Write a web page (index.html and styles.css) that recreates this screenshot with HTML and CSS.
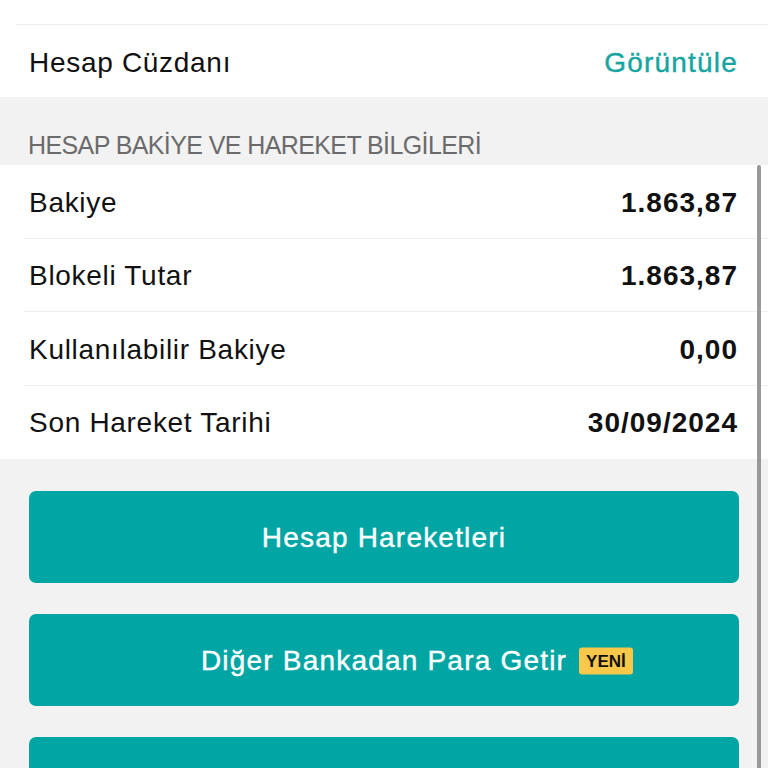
FILE: index.html
```html
<!DOCTYPE html>
<html lang="tr">
<head>
<meta charset="utf-8">
<link rel="stylesheet" href="styles.css">
</head>
<body>
<div class="screen">
  <div class="card top-card">
    <div class="row partial"></div>
    <div class="row wallet">
      <span class="label">Hesap Cüzdanı</span>
      <span class="link">Görüntüle</span>
    </div>
  </div>
  <div class="section-head">HESAP BAKİYE VE HAREKET BİLGİLERİ</div>
  <div class="card">
    <div class="row data"><span class="label">Bakiye</span><span class="value">1.863,87</span></div>
    <div class="row data"><span class="label">Blokeli Tutar</span><span class="value">1.863,87</span></div>
    <div class="row data"><span class="label">Kullanılabilir Bakiye</span><span class="value">0,00</span></div>
    <div class="row data last"><span class="label">Son Hareket Tarihi</span><span class="value">30/09/2024</span></div>
  </div>
  <div class="actions">
    <button class="btn">Hesap Hareketleri</button>
    <button class="btn"><span class="btn-text">Diğer Bankadan Para Getir<span class="badge">YENİ</span></span></button>
    <button class="btn"></button>
  </div>
  <div class="scrollbar"></div>
</div>
</body>
</html>
```

FILE: styles.css
```css
* { box-sizing: border-box; }
html, body {
  margin: 0;
  padding: 0;
  background: #f2f2f2;
}
body {
  font-family: "Liberation Sans", Arial, sans-serif;
  color: #111;
  width: 768px;
  height: 768px;
  overflow: hidden;
}
.screen {
  position: relative;
  width: 768px;
  height: 768px;
  overflow: hidden;
}
.card {
  background: #fff;
}
.row {
  display: flex;
  align-items: center;
  justify-content: space-between;
  padding: 2px 30px 0 29px;
  font-size: 28px;
  letter-spacing: 0.7px;
}
.partial {
  height: 25px;
  border-bottom: 1px solid #efefef;
  margin-left: 16px;
  padding: 0;
}
.wallet {
  height: 72px;
  padding-top: 3px;
}
.link {
  color: #16a5a0;
  letter-spacing: 1.2px;
  -webkit-text-stroke: 0.4px #16a5a0;
}
.section-head {
  height: 68px;
  display: flex;
  align-items: flex-end;
  padding: 0 0 5px 28px;
  font-size: 25px;
  letter-spacing: -0.6px;
  color: #6b6b6b;
}
.data {
  height: 73.5px;
  position: relative;
}
.data::after {
  content: "";
  position: absolute;
  left: 24px;
  right: 0;
  bottom: 0;
  height: 1px;
  background: #efefef;
}
.data.last::after { display: none; }
.value {
  font-weight: bold;
  letter-spacing: 1px;
}
.actions {
  display: flex;
  flex-direction: column;
  gap: 31px;
  padding: 32px 29px 0 29px;
}
.btn {
  height: 92px;
  width: 100%;
  border: none;
  border-radius: 7px;
  background: #00a5a4;
  color: #fff;
  font-family: "Liberation Sans", Arial, sans-serif;
  font-size: 28px;
  letter-spacing: 1.2px;
  -webkit-text-stroke: 0.4px #fff;
  display: flex;
  align-items: center;
  justify-content: center;
  padding: 2px 0 0;
  flex-shrink: 0;
}
.btn-text {
  position: relative;
}
.badge {
  position: absolute;
  left: calc(100% + 12px);
  top: 50%;
  transform: translateY(-50%);
  background: #f8c84a;
  color: #111;
  font-size: 17px;
  font-weight: bold;
  letter-spacing: 0;
  -webkit-text-stroke: 0;
  padding: 4px 7px 3px;
  border-radius: 3px;
  line-height: 20px;
}
.scrollbar {
  position: absolute;
  left: 757px;
  top: 165px;
  width: 4px;
  height: 620px;
  border-radius: 2px;
  background: #999;
}
```
